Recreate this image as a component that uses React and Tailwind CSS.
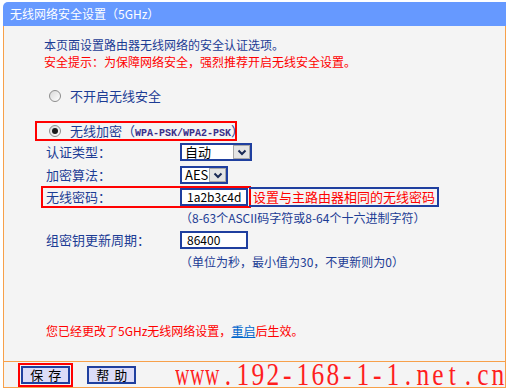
import { useState } from 'react'

const WATERMARK = 'www.192-168-1-1.net.cn'.split('')

function Radio({ on }) {
  return (
    <span className="flex h-[12px] w-[12px] shrink-0 items-center justify-center rounded-full border border-[#8c8c8c] bg-linear-to-br from-[#d9d9d9] to-white">
      {on && <span className="h-[6px] w-[6px] rounded-full bg-[#1a1a1a]" />}
    </span>
  )
}

function Chevron() {
  return (
    <svg width="10" height="7" viewBox="0 0 10 7" aria-hidden>
      <path d="M1.5 1.5 L5 5 L8.5 1.5" fill="none" stroke="#1a2a55" strokeWidth="2" />
    </svg>
  )
}

function Select({ value, className }) {
  return (
    <div className={['flex h-[18px] border-2 border-[#1f3f9f] bg-white', className].join(' ')}>
      <span className="flex-1 pl-[3px] text-[13px] leading-[14px] text-black">{value}</span>
      <span className="flex w-[17px] items-center justify-center border border-[#a8a8a8] bg-[#e4e4e4]">
        <Chevron />
      </span>
    </div>
  )
}

function Field({ value, className }) {
  return (
    <div className={['flex h-[18px] items-center border-2 border-[#1f3f9f] bg-white pl-[5px] text-[12px] text-black', className].join(' ')}>
      {value}
    </div>
  )
}

function Label({ children }) {
  return <span className="w-[134px] shrink-0 whitespace-nowrap text-[13px]">{children}</span>
}

export default function App() {
  const [mode, setMode] = useState('wpa')

  return (
    <div className="h-[392px] w-[509px] overflow-hidden bg-white pl-[3px] pt-[2px] font-['Noto_Sans_CJK_SC','Noto_Sans',sans-serif] text-[12px] text-[#1c3c94]">
      <div className="w-[503px]">
        <div className="flex h-[24px] items-center rounded-tl-[5px] bg-[#6699ff] pl-[7px] text-[12px] text-white">
          无线网络安全设置（5GHz）
        </div>

        <div className="h-[335px] border-x border-[#f7a04a] bg-[#f4f4f4] pt-[10px]">
          <div className="pl-[40px] leading-[17px]">
            <p>本页面设置路由器无线网络的安全认证选项。</p>
            <p className="text-[#ff0000]">安全提示：为保障网络安全，强烈推荐开启无线安全设置。</p>
          </div>

          <button
            type="button"
            onClick={() => setMode('off')}
            className="mt-[16px] flex h-[20px] items-center gap-[9px] whitespace-nowrap pl-[45px] text-[13px]"
          >
            <Radio on={mode === 'off'} />
            不开启无线安全
          </button>

          <button
            type="button"
            onClick={() => setMode('wpa')}
            className="ml-[31px] mt-[15px] flex h-[20px] w-[202px] items-center gap-[9px] whitespace-nowrap border-2 border-[#ff0000] pl-[12px] text-[13px]"
          >
            <Radio on={mode === 'wpa'} />
            <span className="whitespace-nowrap">
              无线加密（<span className="font-['Liberation_Mono',monospace] text-[10px] font-bold text-[#3a2f8a]">WPA-PSK/WPA2-PSK</span>）
            </span>
          </button>

          <div className="flex h-[22px] items-center pl-[42px]">
            <Label>认证类型：</Label>
            <Select value="自动" className="w-[72px]" />
          </div>
          <div className="mt-[1px] flex h-[22px] items-center pl-[42px]">
            <Label>加密算法：</Label>
            <Select value="AES" className="w-[48px]" />
          </div>

          <div className="flex h-[22px] items-center">
            <div className="ml-[37px] flex h-[22px] w-[210px] items-center border-2 border-[#ff0000] pl-[3px]">
              <Label>无线密码：</Label>
              <Field value="1a2b3c4d" className="w-[68px]" />
            </div>
            <div className="-ml-[2px] flex h-[20px] w-[190px] items-center whitespace-nowrap border-2 border-l-0 border-[#1f3f9f] pl-[4px] text-[13px] text-[#ff0000]">
              设置与主路由器相同的无线密码
            </div>
          </div>
          <p className="mt-[1px] pl-[176px] leading-[17px]">（8-63个ASCII码字符或8-64个十六进制字符）</p>

          <div className="mt-[3px] flex h-[22px] items-center pl-[42px]">
            <Label>组密钥更新周期：</Label>
            <Field value="86400" className="w-[68px]" />
          </div>
          <p className="mt-[2px] pl-[176px] leading-[17px]">（单位为秒，最小值为30，不更新则为0）</p>

          <p className="mt-[52px] pl-[42px] leading-[17px] text-[#ff0000]">
            您已经更改了5GHz无线网络设置，<span className="text-[#0066cc] underline">重启</span>后生效。
          </p>
        </div>

        <div className="flex h-[27px] items-center border border-[#f7a04a] bg-[#f4f4f4]">
          <div className="ml-[14px] flex h-[24px] w-[56px] items-center justify-center border-2 border-[#ff0000]">
            <button type="button" className="flex h-[18px] w-[49px] items-center justify-center gap-[5px] border-2 border-[#1f3f9f] bg-[#dcdcf8] text-[13px] text-black">
              <span>保</span>
              <span>存</span>
            </button>
          </div>
          <button type="button" className="ml-[14px] flex h-[18px] w-[49px] items-center justify-center gap-[5px] border-2 border-[#1f3f9f] bg-[#dcdcf8] text-[13px] text-black">
            <span>帮</span>
            <span>助</span>
          </button>
          <div className="ml-[39px] flex font-['Liberation_Serif',serif] text-[31px] leading-[25px] text-[#ff1e1e]">
            {WATERMARK.map((ch, i) => (
              <span key={i} className="flex w-[15px] justify-center">
                <span className={ch === 'w' ? 'inline-block scale-x-[0.64]' : 'inline-block scale-x-[0.82]'}>{ch}</span>
              </span>
            ))}
          </div>
        </div>
      </div>
    </div>
  )
}
